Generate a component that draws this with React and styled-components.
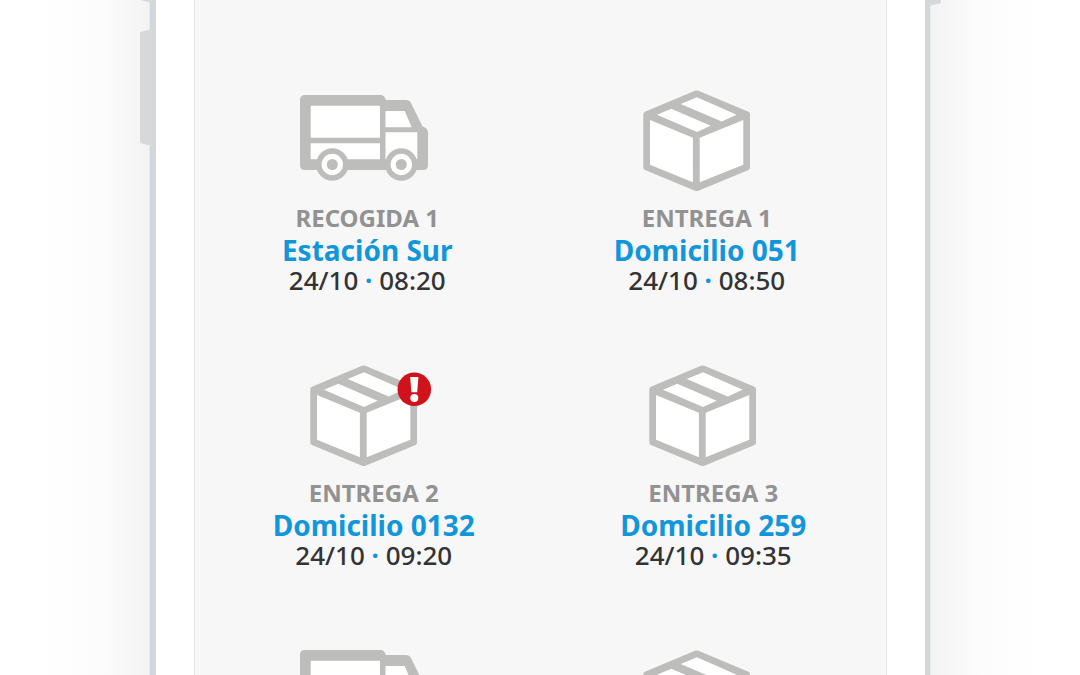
import styled, { createGlobalStyle } from "styled-components";

const GlobalStyle = createGlobalStyle`
  * {
    box-sizing: border-box;
  }
  body {
    margin: 0;
    background-color: #fff;
    font-family: "Noto Sans", "Open Sans", sans-serif;
  }
`;

const Page = styled.main`
  display: flex;
  justify-content: center;
  height: 100vh;
  overflow: hidden;
  background: linear-gradient(
    to right,
    #fff calc(50% - 500px),
    #fcfcfc calc(50% - 440px),
    #f3f3f3 calc(50% - 390px),
    #f3f3f3 calc(50% + 390px),
    #fcfcfc calc(50% + 440px),
    #fff calc(50% + 500px)
  );
`;

const Phone = styled.div`
  position: relative;
  width: 100%;
  max-width: 780px;
  min-height: 100%;
  padding: 0 38px;
  background-color: #fff;
  border: solid #d4d7d9;
  border-width: 0 5px 0 6px;
  box-shadow: 0 0 0 1px #e9ecec;
`;

const SideButton = styled.span`
  position: absolute;
  top: ${(props) => props.$top}px;
  ${(props) => props.$side}: -16px;
  width: 12px;
  height: ${(props) => props.$height}px;
  background-color: #d6d8d9;
  clip-path: ${(props) =>
    props.$side === "left"
      ? "polygon(0 3px, 100% 0, 100% 100%, 0 calc(100% - 3px))"
      : "polygon(0 0, 100% 3px, 100% calc(100% - 3px), 0 100%)"};
`;

const Screen = styled.div`
  min-height: 100%;
  padding: 90px 6px 0;
  background-color: #f7f7f7;
  border: solid #e4e4e4;
  border-width: 0 1px;
`;

const Row = styled.div`
  display: flex;
  justify-content: space-around;
  margin-bottom: ${(props) => props.$gap}px;
`;

const Stop = styled.section`
  display: flex;
  flex-direction: column;
  align-items: center;
  min-width: ${(props) => (props.$type === "truck" ? 176 : 190)}px;
`;

const IconBox = styled.div`
  display: flex;
  align-items: ${(props) => props.$align || "center"};
  height: 101px;
  margin-bottom: 11px;

  svg {
    display: block;
  }
`;

const Label = styled.h2`
  margin: 0;
  color: #929292;
  font-size: 24px;
  font-weight: 700;
  line-height: 32px;
`;

const Place = styled.a`
  color: #1296db;
  font-size: 28px;
  font-weight: 700;
  line-height: 32px;
  text-decoration: none;
`;

const Time = styled.p`
  margin: 0;
  color: #333;
  font-size: 26px;
  font-weight: 500;
  line-height: 28px;
`;

const Dot = styled.span`
  color: #1296db;
  font-weight: 700;
`;

const Truck = () => (
  <svg width="135" height="91" viewBox="0 0 135 91" aria-hidden="true">
    <path
      fill="#bdbdbc"
      d="M5 0H81Q84 0 86 5H106Q109.500 5 111 8L122.500 31.500Q128 33 128 38V70Q128 75 123 75H5Q0 75 0 70V5Q0 0 5 0Z"
    />
    <path
      fill="#fff"
      d="M10.700 10.700H80V42.700H10.700ZM10.700 48.300H80V64.300H10.700ZM85.500 16H104.700L111.700 32.300H85.500ZM85.500 37.300H117.300V64.300H85.500Z"
    />
    {[32.3, 101.3].map((cx) => (
      <g key={cx}>
        <circle cx={cx} cy="69.500" r="16.200" fill="#bdbdbc" />
        <circle cx={cx} cy="69.500" r="10.700" fill="#fff" />
        <circle cx={cx} cy="69.500" r="5.500" fill="#bdbdbc" />
      </g>
    ))}
  </svg>
);

const Parcel = ({ alert }) => (
  <svg width="128" height="101" viewBox="0 0 128 101" aria-hidden="true">
    <path
      fill="#bdbdbc"
      d="M52 .8Q53.700 0 55.400 .8L105.500 21.800Q107 22.500 107 24.300V77.500Q107 79.300 105.500 80L55.400 100.700Q53.700 101.300 52 100.700L1.900 80Q.3 79.300 .3 77.500V24.300Q.3 22.500 1.900 21.800Z"
    />
    <path
      fill="#fff"
      d="M7 30L49.900 47.700V92.300L7 74.700ZM56.700 47.700L100.300 30V74.700L56.700 92.300ZM14 24.700L28.300 18.700L67.700 35.700L54 41.900ZM37.700 14L54 7.300L93.700 24.700L78.700 31.500Z"
    />
    {alert && (
      <g>
        <circle cx="104.300" cy="24.300" r="16.800" fill="#d0121b" />
        <path fill="#fff" d="M100.200 12H108.400L107.200 27.300H101.400Z" />
        <circle cx="104.300" cy="33" r="4" fill="#fff" />
      </g>
    )}
  </svg>
);

const rows = [
  {
    gap: 71,
    stops: [
      { type: "truck", label: "RECOGIDA 1", place: "Estación Sur", date: "24/10", time: "08:20" },
      { type: "parcel", label: "ENTREGA 1", place: "Domicilio 051", date: "24/10", time: "08:50" },
    ],
  },
  {
    gap: 81,
    stops: [
      { type: "parcel", label: "ENTREGA 2", place: "Domicilio 0132", date: "24/10", time: "09:20", alert: true },
      { type: "parcel", label: "ENTREGA 3", place: "Domicilio 259", date: "24/10", time: "09:35" },
    ],
  },
  {
    gap: 0,
    align: "flex-start",
    stops: [{ type: "truck" }, { type: "parcel" }],
  },
];

const App = () => {
  return (
    <>
      <GlobalStyle />
      <Page>
        <Phone>
          <SideButton $side="left" $top={-60} $height={63} />
          <SideButton $side="left" $top={29} $height={117} />
          <SideButton $side="right" $top={-60} $height={66} />
          <Screen>
            {rows.map((row, i) => (
              <Row key={i} $gap={row.gap}>
                {row.stops.map((stop, j) => (
                  <Stop key={j} $type={stop.type}>
                    <IconBox $align={row.align}>
                      {stop.type === "truck" ? <Truck /> : <Parcel alert={stop.alert} />}
                    </IconBox>
                    {stop.label && (
                      <>
                        <Label>{stop.label}</Label>
                        <Place href="#">{stop.place}</Place>
                        <Time>
                          {stop.date} <Dot>·</Dot> {stop.time}
                        </Time>
                      </>
                    )}
                  </Stop>
                ))}
              </Row>
            ))}
          </Screen>
        </Phone>
      </Page>
    </>
  );
};

export default App;
